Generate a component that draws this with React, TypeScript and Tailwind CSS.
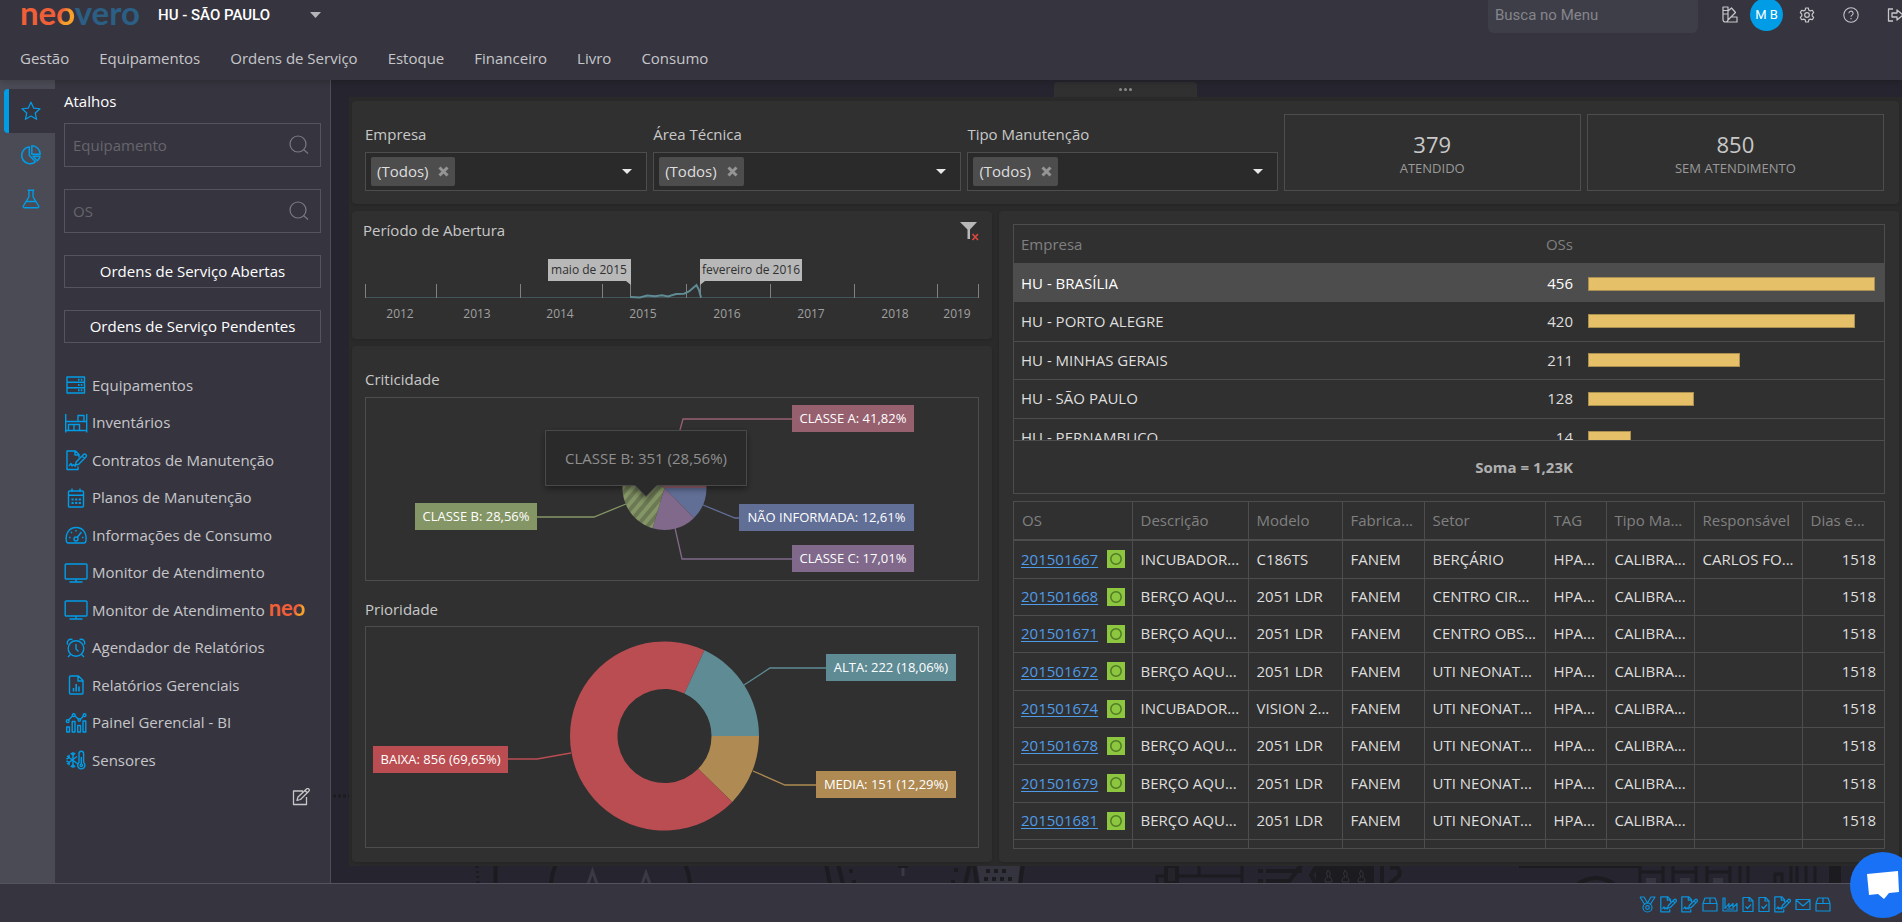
import React, { useState } from 'react';

const NAV = ['Gestão', 'Equipamentos', 'Ordens de Serviço', 'Estoque', 'Financeiro', 'Livro', 'Consumo'];

const Svg: React.FC<{ w?: number; h?: number; box?: string; sw?: number; className?: string; children: React.ReactNode }> = ({
  w = 24,
  h = 24,
  box = '0 0 24 24',
  sw = 1.4,
  className,
  children,
}) => (
  <svg width={w} height={h} viewBox={box} fill="none" stroke="currentColor" strokeWidth={sw} strokeLinejoin="round" aria-hidden="true" className={className}>
    {children}
  </svg>
);

const signedDoc = (
  <>
    <path d="M14 18.5v3H3V3h8.500l3.500 3.500v3M11 3v4h4M5 18l2-2.500 1 2.500 1.500-1.500 1.500 1.500h1" />
    <path d="M11.500 17l.8-3.300 7-7a1.600 1.600 0 0 1 2.600 2.300l-7.200 7.200zM18 8l2.500 2.300" />
  </>
);

const monitor = (
  <>
    <rect x="1.200" y="3" width="21.800" height="15" rx="1" />
    <path d="M12 18v3M5.500 21h13" />
  </>
);

const box3d = (
  <path d="M1 7.500h14V15H1zM1 7.500L3 2h10l2 5.500M8 2v5.500" />
);

const checkDoc = <path d="M1 1.500h6.500L11 5v10.500H1zM7 1.500V5h4M3.500 10.500l2 2 3.500-4" />;

const SHORTCUTS = [
  {
    label: 'Equipamentos',
    icon: (
      <>
        <rect x="3" y="4" width="17.500" height="16" />
        <path d="M3 9.300h17.500M3 14.700h17.500" />
        <path d="M14 6.700h1.500M16.800 6.700h1.500M14 12h1.500M16.800 12h1.500M14 17.300h1.500M16.800 17.300h1.500" strokeWidth="2" />
      </>
    ),
  },
  {
    label: 'Inventários',
    icon: <path d="M1.700 3v18.500M22.700 3v18.500M1.700 10.500h21M1.700 19.500h21M4.500 19.500v-6h11v6M10 13.500v6M14 10.500V4.500h6v6" />,
  },
  { label: 'Contratos de Manutenção', icon: signedDoc },
  {
    label: 'Planos de Manutenção',
    icon: (
      <>
        <rect x="4.500" y="5" width="15" height="16" rx="1" />
        <path d="M4.500 9.300h15M8 2.500V6M16 2.500V6" />
        <path d="M7.500 13.500h9.500M7.500 17h9.500" strokeWidth="2" strokeDasharray="2.200 1.400" />
      </>
    ),
  },
  {
    label: 'Informações de Consumo',
    icon: (
      <>
        <path d="M4 20a2 2 0 0 1-1.500-1.500C1 10 5.500 4.500 12.200 4.500S23.300 10 21.800 18.500A2 2 0 0 1 20 20z" />
        <circle cx="12" cy="16" r="2" />
        <path d="M13.200 14.500l4.300-5.500M12 7v1.500M7 9l1 1M5 14.500h1.500M18 14.500h1.500" />
      </>
    ),
  },
  { label: 'Monitor de Atendimento', icon: monitor },
  { label: 'Monitor de Atendimento', icon: monitor, neo: true },
  {
    label: 'Agendador de Relatórios',
    icon: (
      <>
        <circle cx="12" cy="12.500" r="7.800" />
        <path d="M12 8v5l2.500 2.500M3.500 8.500C2.500 5 5 2.500 8.500 3.500M20.500 8.500C21.500 5 19 2.500 15.500 3.500M6.500 18.500L4 21M17.500 18.500L20 21" />
      </>
    ),
  },
  {
    label: 'Relatórios Gerenciais',
    icon: (
      <>
        <path d="M6.500 3h8l4.500 4.500V20a1 1 0 0 1-1 1H6.500a1 1 0 0 1-1-1V4a1 1 0 0 1 1-1zM14 3v5h5" />
        <path d="M9.500 18.500V15M12.200 18.500V11M15 18.500v-5" strokeWidth="1.600" />
      </>
    ),
  },
  {
    label: 'Painel Gerencial - BI',
    icon: (
      <>
        <rect x="2.700" y="16" width="2.800" height="5" />
        <rect x="8.200" y="10.500" width="2.800" height="10.500" />
        <rect x="13.700" y="14.500" width="2.800" height="6.500" />
        <rect x="19" y="10" width="2.800" height="11" />
        <path d="M4.500 9l4-4M11 5l3.500 3.200M16.500 8.200L19.500 5" />
        <circle cx="3.700" cy="10.200" r="1.400" />
        <circle cx="9.700" cy="4.200" r="1.400" />
        <circle cx="15.300" cy="9" r="1.200" />
        <circle cx="20.500" cy="4.200" r="1.400" />
      </>
    ),
  },
  {
    label: 'Sensores',
    icon: (
      <>
        <path d="M9 4v16M3 8l11 8M3 16l10-7.500M6.800 5L9 7.200 11.200 5M6.800 19L9 16.800l2.200 2.200M2.500 11l2.700-1.300L5 6.800M2.500 13l2.700 1.300L5 17.200" />
        <path d="M15 14.500V5.500a2.300 2.300 0 0 1 4.600 0v9a3.600 3.600 0 1 1-4.600 0z" />
        <circle cx="17.300" cy="17.300" r="1.200" />
        <path d="M17.300 9v7" />
      </>
    ),
  },
];

const COMPANIES = [
  { name: 'HU - BRASÍLIA', count: 456, bar: 100 },
  { name: 'HU - PORTO ALEGRE', count: 420, bar: 93 },
  { name: 'HU - MINHAS GERAIS', count: 211, bar: 53 },
  { name: 'HU - SÃO PAULO', count: 128, bar: 37 },
  { name: 'HU - PERNAMBUCO', count: 14, bar: 15 },
];

const COLUMNS = [
  { title: 'OS', cls: 'w-[118px]' },
  { title: 'Descrição', cls: 'w-[116px]' },
  { title: 'Modelo', cls: 'w-[94px]' },
  { title: 'Fabrica...', cls: 'w-[82px]' },
  { title: 'Setor', cls: 'w-[121px]' },
  { title: 'TAG', cls: 'w-[61px]' },
  { title: 'Tipo Ma...', cls: 'w-[88px]' },
  { title: 'Responsável', cls: 'w-[108px]' },
  { title: 'Dias e...', cls: 'w-[82px]' },
];

const ORDERS = [
  ['201501667', 'INCUBADOR...', 'C186TS', 'BERÇÁRIO', 'CARLOS FO...'],
  ['201501668', 'BERÇO AQU...', '2051 LDR', 'CENTRO CIR...', ''],
  ['201501671', 'BERÇO AQU...', '2051 LDR', 'CENTRO OBS...', ''],
  ['201501672', 'BERÇO AQU...', '2051 LDR', 'UTI NEONAT...', ''],
  ['201501674', 'INCUBADOR...', 'VISION 2...', 'UTI NEONAT...', ''],
  ['201501678', 'BERÇO AQU...', '2051 LDR', 'UTI NEONAT...', ''],
  ['201501679', 'BERÇO AQU...', '2051 LDR', 'UTI NEONAT...', ''],
  ['201501681', 'BERÇO AQU...', '2051 LDR', 'UTI NEONAT...', ''],
];

// point on a circle, angle in degrees clockwise from 3 o'clock
const at = (cx: number, cy: number, r: number, deg: number) => {
  const a = (deg * Math.PI) / 180;
  return `${(cx + r * Math.cos(a)).toFixed(2)} ${(cy + r * Math.sin(a)).toFixed(2)}`;
};

const slice = (cx: number, cy: number, r: number, inner: number, from: number, to: number) => {
  const large = to - from > 180 ? 1 : 0;
  return `M${at(cx, cy, r, from)}A${r} ${r} 0 ${large} 1 ${at(cx, cy, r, to)}L${at(cx, cy, inner, to)}A${inner} ${inner} 0 ${large} 0 ${at(cx, cy, inner, from)}Z`;
};

interface Tag {
  text: string;
  color: string;
  x: number;
  y: number;
  w: number;
  line: string;
}

const ChartTag: React.FC<{ tag: Tag }> = ({ tag }) => (
  <g>
    <polyline points={tag.line} fill="none" stroke={tag.color} strokeWidth="1.3" />
    <rect x={tag.x} y={tag.y} width={tag.w} height="27" fill={tag.color} />
    <text x={tag.x + tag.w / 2} y={tag.y + 18} textAnchor="middle" fill="#fff" className="text-[13px]">
      {tag.text}
    </text>
  </g>
);

const CRITICIDADE: Tag[] = [
  { text: 'CLASSE A: 41,82%', color: '#97606f', x: 426, y: 7, w: 122, line: '426,21 317,21 309,50' },
  { text: 'CLASSE B: 28,56%', color: '#859666', x: 49, y: 105, w: 122, line: '171,119 228,119 260,106' },
  { text: 'NÃO INFORMADA: 12,61%', color: '#616e96', x: 373, y: 106, w: 175, line: '373,120 369,120 337,107' },
  { text: 'CLASSE C: 17,01%', color: '#80698b', x: 426, y: 147, w: 122, line: '426,161 316,161 309,130' },
];

const PRIORIDADE: Tag[] = [
  { text: 'ALTA: 222 (18,06%)', color: '#5f8b95', x: 460, y: 27, w: 130, line: '460,41 404,41 378,58' },
  { text: 'MEDIA: 151 (12,29%)', color: '#af8a53', x: 450, y: 144, w: 140, line: '450,158 419,158 387,144' },
  { text: 'BAIXA: 856 (69,65%)', color: '#ba4d51', x: 7, y: 119, w: 135, line: '142,132 171,132 205,126' },
];

const YEARS = [
  [35, '2012'],
  [112, '2013'],
  [195, '2014'],
  [278, '2015'],
  [362, '2016'],
  [446, '2017'],
  [530, '2018'],
  [592, '2019'],
] as const;

const Filter: React.FC<{ id: string; label: string }> = ({ id, label }) => {
  const [value, setValue] = useState('(Todos)');
  return (
    <div className="flex flex-col justify-end gap-2">
      <label htmlFor={id} className="leading-5">{label}</label>
      <div className="relative flex h-[39px] items-center border border-[#4d4d4d] bg-[#2a2a2a] pl-[5px]">
        {value && (
          <span className="flex h-[29px] shrink-0 items-center gap-[10px] rounded-xs bg-[#4d4d4d] px-[6px] text-[#dedede]">
            {value}
            <button type="button" aria-label={`Remover ${label}`} onClick={() => setValue('')} className="text-[#959595]">
              <Svg w={11} h={11} box="0 0 11 11" sw={3}><path d="M1.500 1.500l8 8M9.500 1.500l-8 8" /></Svg>
            </button>
          </span>
        )}
        <select id={id} value="" onChange={e => setValue(e.target.value)} className="h-full min-w-0 flex-1 appearance-none bg-transparent outline-none">
          <option value="" />
          <option value="(Todos)" />
        </select>
        <svg width="10" height="5" viewBox="0 0 10 5" className="pointer-events-none absolute right-[14px]" aria-hidden="true">
          <path d="M0 0h10L5 5z" fill="#e8e8e8" />
        </svg>
      </div>
    </div>
  );
};

const Kpi: React.FC<{ value: string; label: string }> = ({ value, label }) => (
  <div className="flex h-[77px] flex-col items-center justify-end border border-[#4d4d4d] pb-3">
    <div className="text-[22px] leading-7 text-[#c8c8c8]">{value}</div>
    <div className="text-[13px] leading-5 text-[#9a9a9a]">{label}</div>
  </div>
);

const Backdrop: React.FC = () => (
  <svg viewBox="331 80 1571 803" className="pointer-events-none absolute bottom-0 left-0 h-[803px] w-[1571px]" fill="none" stroke="#1b1b20" strokeWidth="4" aria-hidden="true">
    <path d="M333 796h17" strokeWidth="3" strokeDasharray="3 2" />
    <path d="M477 866l1 17" strokeWidth="3" strokeDasharray="2 3" />
    <path d="M495.500 866v17M556 864q-4 9-5 19M685 864q4 9 5 19M826 864l4 20M838 864l5 20M970 864l-5 20M974 864l3 20M1023 864l-3 20" />
    <path d="M588 884l4.500-13 4.500 13M642 884l4-11 4 11M903 868v8" stroke="#3a3a44" strokeWidth="3" />
    <path d="M898 866h10" />
    <path d="M977 866h43l-2 17h-38z" fill="#34343e" stroke="none" />
    <path d="M851 869v4M854 880v4M953 880v4M956 868v4M986 871h24M984 879h28" strokeWidth="4" strokeDasharray="4 4" />
    <path d="M1157 883v-7h86M1242 866v17M1199 866v10" strokeWidth="3" />
    <path d="M1166 866h11v17h-11z" fill="#24242a" />
    <path d="M1258 871h5M1266 871h36M1258 881h5M1266 881h24M1302 864l-15 20M1318 864l-7 11 5 9M1382 866v17M1390 868q12-3 9 8l-10 8" />
    <path d="M1316 866h58v17h-58z" fill="#1b1b20" stroke="none" />
    <path d="M1325 882q0-5 3-5-3-3 0-7 4 4 1 7 3 0 3 5zM1342 882q0-5 3-5-3-3 0-7 4 4 1 7 3 0 3 5zM1358 882q0-5 3-5-3-3 0-7 4 4 1 7 3 0 3 5z" stroke="#34343c" strokeWidth="1" />
    <path d="M1519 867h120" strokeWidth="2" />
    <path d="M1578 884q18-12 36 0" />
    <path d="M1640 866v17M1663 866v17M1640 872h23M1673 866v17M1696 866v17M1673 872h23M1707 866v17M1730 866v17M1707 872h23M1740 866v17M1748 866v17M1775 883v-9h7v9M1791 866v17M1797 866v17M1806 866v17M1815 866v17" strokeWidth="3" />
    <path d="M1646 878h10v5h-10zM1680 878h10v5h-10zM1713 878h10v5h-10z" fill="#34343e" stroke="none" />
    <path d="M1829 866h12v17h-12z" fill="#1b1b20" stroke="none" />
  </svg>
);

const Neo: React.FC = () => (
  <>
    <span className="text-[#f15f38]">ne</span>
    <span className="bg-linear-to-br from-[#f15f38] from-40% to-[#f9a02b] to-60% bg-clip-text text-transparent">o</span>
  </>
);

const Header: React.FC = () => (
  <header className="relative z-10 h-20 shrink-0 overflow-x-clip bg-[#36353f] shadow-md">
    <div className="flex h-[29px] items-center pl-5">
      <a href="#inicio" aria-label="neovero" className="flex h-[29px] w-[121px] items-center font-['Lato',sans-serif] text-[33px] leading-[20px] font-bold">
        <span className="-mt-[6px] whitespace-nowrap"><Neo /><span className="text-[#2b5f85]">vero</span></span>
      </a>
      <div className="relative ml-[17px] flex w-[163px] items-center font-['Roboto',sans-serif]">
        <select aria-label="Unidade" className="w-full appearance-none bg-transparent text-[15px] leading-6 font-medium text-white outline-none">
          <option>HU - SÃO PAULO</option>
        </select>
        <svg width="11" height="6" viewBox="0 0 11 6" className="pointer-events-none absolute right-0" aria-hidden="true"><path d="M0 0h11L5.500 6z" fill="#b4b4b8" /></svg>
      </div>
      <input
        aria-label="Busca no Menu"
        placeholder="Busca no Menu"
        className="ml-auto h-[37px] w-[210px] shrink-0 rounded-md bg-[#3e3e48] px-[7px] font-['Roboto',sans-serif] text-[15px] text-[#c6c6ca] outline-none placeholder:text-[#85858b]"
      />
      <div className="-mr-[3px] ml-6 flex shrink-0 items-center text-[#c6c6ca]">
        <button type="button" aria-label="Temas">
          <Svg w={16} h={17} box="0 0 16 17" sw={1.2}>
            <path d="M1 1h5v12.500a2.500 2.500 0 0 1-5 0zM1 4.500h5M1 8h5M6 5l3.500-3 4 4.500L6 14M9.500 11H15v5H3.500" />
          </Svg>
        </button>
        <button type="button" className="ml-[12px] h-[33px] w-[33px] rounded-full bg-[#009ce6] font-['Roboto',sans-serif] text-[13px] text-white">M B</button>
        <button type="button" aria-label="Configurações" className="ml-4">
          <Svg w={16} h={16} sw={1.800}>
            <path d="M10 1.500h4l.7 3.200 2.300 1.200 3-1 2 3.400-2.200 2.300v2.800l2.200 2.300-2 3.400-3-1-2.300 1.200-.7 3.200h-4l-.7-3.200L7 18.100l-3 1-2-3.400 2.200-2.300v-2.800L2 8.300l2-3.400 3 1 2.300-1.200z" />
            <circle cx="12" cy="12" r="3.500" />
          </Svg>
        </button>
        <button type="button" aria-label="Ajuda" className="ml-7">
          <Svg w={16} h={16} sw={1.600}>
            <circle cx="12" cy="12" r="10.800" />
            <path d="M8.800 9.500a3.200 3.200 0 1 1 4.800 2.700c-1.200.7-1.600 1.200-1.600 2.500M12 16.500v2" />
          </Svg>
        </button>
        <button type="button" aria-label="Sair" className="ml-7">
          <Svg w={18} h={16} box="0 0 18 16" sw={1.300}>
            <path d="M6 2H1.500v12H6M5 6h5V3l6 5-6 5v-3H5z" />
          </Svg>
        </button>
      </div>
    </div>
    <nav className="mt-2 flex h-[42px] items-center gap-[30px] pl-5 text-[#c6c6ca]">
      {NAV.map(item => (
        <a key={item} href="#menu">{item}</a>
      ))}
    </nav>
  </header>
);

const SearchBox: React.FC<{ label: string }> = ({ label }) => (
  <div className="relative mb-[22px] flex h-11 items-center border border-[#55545e]">
    <input aria-label={label} placeholder={label} className="h-full w-full bg-transparent px-2 text-[#c6c6ca] outline-none placeholder:text-[#66656c]" />
    <Svg w={20} h={20} box="0 0 20 20" sw={1.2} className="pointer-events-none absolute right-[11px] text-[#7b7a81]">
      <circle cx="9" cy="9" r="8" />
      <path d="M14.500 14.500l4.500 4" />
    </Svg>
  </div>
);

const Sidebar: React.FC = () => (
  <aside className="flex shrink-0">
    <div className="flex w-[55px] flex-col bg-[#4b4b55] pt-[9px] pl-1 text-[#009ce6]">
      <button type="button" aria-label="Atalhos" className="flex h-11 items-center justify-center rounded-l border-l-5 border-[#009ce6] bg-[#36353f] pr-[2px]">
        <Svg w={20} h={20} sw={1.500}><path d="M12 1.500l3.200 7 7.600.8-5.700 5.100 1.600 7.600-6.700-3.900L5.300 22l1.600-7.600-5.700-5.100 7.600-.8z" /></Svg>
      </button>
      <button type="button" aria-label="Indicadores" className="flex h-11 items-center justify-center pl-[3px]">
        <Svg w={20} h={20} sw={1.800}>
          <path d="M10 2.500A10 10 0 1 0 17.500 20L10 12.500zM13 1v10h10A10 10 0 0 0 13 1zM14.500 13.500h8.300a9 9 0 0 1-3.300 5.500z" />
        </Svg>
      </button>
      <button type="button" aria-label="Laboratório" className="flex h-11 items-center justify-center pl-[3px]">
        <Svg w={20} h={20} sw={1.600}><path d="M8 1.500h8M9.500 1.500v8L2.700 20.500q-.5 2 1.500 2h15.600q2 0 1.500-2L14.500 9.500v-8M6.500 15h11" /></Svg>
      </button>
    </div>
    <div className="w-[276px] border-r border-[#4f4e58] bg-[#36353f] px-[9px] pt-[11px]">
      <h2 className="mb-3 leading-5 text-white">Atalhos</h2>
      <SearchBox label="Equipamento" />
      <SearchBox label="OS" />
      <button type="button" className="mb-[22px] block h-[33px] w-full border border-[#55545e] text-white">Ordens de Serviço Abertas</button>
      <button type="button" className="mb-6 block h-[33px] w-full border border-[#55545e] text-white">Ordens de Serviço Pendentes</button>
      <ul className="flex h-[411px] flex-col justify-between text-[#c6c6ca]">
        {SHORTCUTS.map((s, i) => (
          <li key={i}>
            <a href="#atalho" className="flex h-9 items-center">
              <span className="mr-1 text-[#009ce6]"><Svg>{s.icon}</Svg></span>
              {s.label}
              {s.neo && <span className="-mt-1 ml-1 font-['Lato',sans-serif] text-[22px] leading-5 font-bold"><Neo /></span>}
            </a>
          </li>
        ))}
      </ul>
      <div className="mt-[10px] flex justify-end pr-[10px]">
        <button type="button" aria-label="Editar atalhos" className="text-[#c6c6ca]">
          <Svg w={19} h={18} box="0 0 19 18" sw={1.300}>
            <path d="M11 3H1.500v13.500H14.500V9M5 12.500l1-3.500 8.500-8a1.500 1.500 0 0 1 2.300 2.200l-8.300 8.300zM13 2.500l2.300 2.300" />
          </Svg>
        </button>
      </div>
    </div>
  </aside>
);

const PeriodChart: React.FC = () => (
  <svg viewBox="0 0 614 70" className="block w-full" role="img" aria-label="Período de Abertura">
    <path d="M1 42.500h612" stroke="#41545a" />
    {[0.5, 71.5, 155.5, 237.5, 321.5, 405.5, 489.5, 572.5, 613.5].map(x => (
      <path key={x} d={`M${x} 29v14`} stroke="#808080" />
    ))}
    <path d="M265.500 4v39M335.500 4v39" stroke="#808080" />
    <polyline points="265,42 275,42.500 282,40.500 290,41.200 297,40.300 303,41.500 311,39 319,38.700 324,36.500 328,33 331.500,30 334,35 336,42.500" fill="none" stroke="#5f8b95" strokeWidth="2" />
    <path d="M183 4h83v26l-5-4h-78zM335 4h102v22h-97l-5 4z" fill="#b8b8b8" />
    <text x="224" y="19" textAnchor="middle" fill="#303030" className="text-[12px]">maio de 2015</text>
    <text x="386" y="19" textAnchor="middle" fill="#303030" className="text-[12px]">fevereiro de 2016</text>
    {YEARS.map(([x, y]) => (
      <text key={y} x={x} y="63" textAnchor="middle" fill="#a0a0a0" className="text-[12px]">{y}</text>
    ))}
  </svg>
);

const CriticidadeChart: React.FC = () => (
  <svg viewBox="0 0 612 182" className="block w-full" role="img" aria-label="Criticidade">
    <defs>
      <pattern id="hatch" width="8" height="8" patternUnits="userSpaceOnUse" patternTransform="rotate(40)">
        <path d="M0 0h8v8H0z" fill="#859666" />
        <path d="M0 0h4v8H0z" fill="#6b7853" />
      </pattern>
      <filter id="tip" x="-10%" y="-20%" width="120%" height="150%">
        <feDropShadow dx="0" dy="3" stdDeviation="3" floodColor="#000" floodOpacity="0.4" />
      </filter>
    </defs>
    {CRITICIDADE.map(t => <ChartTag key={t.text} tag={t} />)}
    <path d={slice(298.5, 90, 42, 0, 0, 45.4)} fill="#616e96" />
    <path d={slice(298.5, 90, 42, 0, 45.4, 106.6)} fill="#80698b" />
    <path d={slice(298.5, 90, 42, 0, 106.6, 209.4)} fill="url(#hatch)" />
    <path d={slice(298.5, 90, 42, 0, 209.4, 360)} fill="#97606f" />
    <path d="M179.500 32.500h201v55h-89.500l-11 11-11-11h-89.500z" fill="#2a2a2a" stroke="#4a4a4a" filter="url(#tip)" />
    <text x="280" y="66" textAnchor="middle" fill="#8f8f8f" className="text-[15px]">CLASSE B: 351 (28,56%)</text>
  </svg>
);

const PrioridadeChart: React.FC = () => (
  <svg viewBox="0 0 612 220" className="block w-full" role="img" aria-label="Prioridade">
    {PRIORIDADE.map(t => <ChartTag key={t.text} tag={t} />)}
    <path d={slice(298.5, 109, 94.5, 47, 0, 44.2)} fill="#af8a53" />
    <path d={slice(298.5, 109, 94.5, 47, 44.2, 295)} fill="#ba4d51" />
    <path d={slice(298.5, 109, 94.5, 47, 295, 360)} fill="#5f8b95" />
  </svg>
);

const CompanyTable: React.FC = () => (
  <div className="border border-[#4d4d4d]">
    <div className="h-[215px] overflow-hidden">
      <table className="w-full table-fixed">
        <colgroup>
          <col />
          <col className="w-[100px]" />
          <col className="w-[303px]" />
        </colgroup>
        <thead>
          <tr className="h-[39px] border-b-2 border-[#4d4d4d] text-[#808080]">
            <th className="px-[7px] text-left font-normal">Empresa</th>
            <th className="px-2 text-right font-normal">OSs</th>
            <th />
          </tr>
        </thead>
        <tbody className="text-[#dedede]">
          {COMPANIES.map((c, i) => (
            <tr key={c.name} className={i === 0 ? 'h-[38px] bg-[#4d4d4d] text-white' : i === 2 ? 'h-[38px] border-b border-[#4d4d4d]' : 'h-[39px] border-b border-[#4d4d4d]'}>
              <td className="px-[7px]">{c.name}</td>
              <td className="px-2 text-right">{c.count}</td>
              <td className="pr-[9px] pl-[7px]">
                <div className="h-[14px] border border-[#a98f50] bg-[#e5c068]" style={{ width: `${c.bar}%` }} />
              </td>
            </tr>
          ))}
        </tbody>
      </table>
    </div>
    <div className="flex h-[53px] items-center border-t border-[#4d4d4d]">
      <div className="flex-1 pr-2 text-right font-bold text-[#b0b0b0]">Soma = 1,23K</div>
      <div className="w-[303px]" />
    </div>
  </div>
);

const OrdersTable: React.FC = () => (
  <div className="h-[348px] overflow-hidden border border-[#4d4d4d]">
    <table className="w-full table-fixed whitespace-nowrap">
      <thead>
        <tr className="h-[38px] border-b-2 border-[#4d4d4d] text-[#808080]">
          {COLUMNS.map(c => (
            <th key={c.title} className={`${c.cls} overflow-hidden border-r border-[#4d4d4d] px-2 text-left font-normal last:border-r-0`}>{c.title}</th>
          ))}
        </tr>
      </thead>
      <tbody className="text-[#dedede]">
        {ORDERS.map(([os, desc, model, sector, owner], i) => (
          <tr key={os} className={i % 3 === 0 ? 'h-[38px] border-b border-[#4d4d4d]' : 'h-[37px] border-b border-[#4d4d4d]'}>
            <td className="border-r border-[#4d4d4d] px-[7px]">
              <div className="flex items-center justify-between">
                <a href="#os" className="text-[#4f9be8] underline underline-offset-2">{os}</a>
                <svg width="18" height="18" viewBox="0 0 18 18" aria-hidden="true">
                  <path d="M0 0h18v18H0z" fill="#8dc63f" />
                  <circle cx="9" cy="9" r="5.2" fill="none" stroke="#4f7a26" strokeWidth="1.5" />
                </svg>
              </div>
            </td>
            {[desc, model, 'FANEM', sector, 'HPA...', 'CALIBRA...', owner].map((v, k) => (
              <td key={k} className="overflow-hidden border-r border-[#4d4d4d] px-2">{v}</td>
            ))}
            <td className="px-2 text-right">1518</td>
          </tr>
        ))}
        <tr className="h-[38px]">
          {COLUMNS.map(c => (
            <td key={c.title} className="border-r border-[#4d4d4d] last:border-r-0" />
          ))}
        </tr>
      </tbody>
    </table>
  </div>
);

const Dashboard: React.FC = () => (
  <main className="relative min-w-0 flex-1 overflow-hidden bg-[#26252f] pb-[17px] pl-[18px]">
    <Backdrop />
    <div className="relative flex flex-col pt-[2px] text-[#c8c8c8]">
      <button type="button" aria-label="Opções do painel" className="flex h-[15px] w-[143px] items-center justify-center gap-[2px] self-center rounded-t-sm bg-[#303030]">
        <span className="h-[3px] w-[3px] rounded-full bg-[#8a8a8a]" />
        <span className="h-[3px] w-[3px] rounded-full bg-[#8a8a8a]" />
        <span className="h-[3px] w-[3px] rounded-full bg-[#8a8a8a]" />
      </button>
      <div className="flex flex-col gap-[7px] bg-[#2a2a2a] px-[3px] py-1">
        <section className="grid grid-cols-[282fr_308fr_310fr_297fr_297fr] gap-[6px] rounded-sm bg-[#303030] pt-[13px] pr-[15px] pb-[13px] pl-[13px] shadow">
          <Filter id="empresa" label="Empresa" />
          <Filter id="area" label="Área Técnica" />
          <Filter id="tipo" label="Tipo Manutenção" />
          <Kpi value="379" label="ATENDIDO" />
          <Kpi value="850" label="SEM ATENDIMENTO" />
        </section>
        <div className="grid grid-cols-[640fr_900fr] gap-[7px]">
          <div className="flex flex-col gap-[7px]">
            <section className="rounded-sm bg-[#303030] px-[13px] pt-[9px] pb-[14px] shadow">
              <div className="flex h-[35px] items-start justify-between">
                <h3 className="-ml-[2px] leading-5">Período de Abertura</h3>
                <button type="button" aria-label="Limpar filtro" className="mt-[2px]">
                  <svg width="19" height="19" viewBox="0 0 19 19" aria-hidden="true">
                    <path d="M0 0h17l-7 7.500V17H7.500V7.500z" fill="#b8b8b8" />
                    <path d="M12.500 12l5.500 6M18 12l-5.500 6" stroke="#e0483e" strokeWidth="1.600" />
                  </svg>
                </button>
              </div>
              <PeriodChart />
            </section>
            <section className="rounded-sm bg-[#303030] px-[13px] pt-[23px] pb-[14px] shadow">
              <h3 className="mb-2 leading-5">Criticidade</h3>
              <div className="mb-[18px] border border-[#4d4d4d]"><CriticidadeChart /></div>
              <h3 className="mb-[7px] leading-5">Prioridade</h3>
              <div className="border border-[#4d4d4d]"><PrioridadeChart /></div>
            </section>
          </div>
          <section className="flex flex-col gap-[7px] rounded-sm bg-[#303030] px-[14px] pt-[13px] pb-[13px] shadow">
            <CompanyTable />
            <OrdersTable />
          </section>
        </div>
      </div>
    </div>
  </main>
);

const FOOTER_ICONS = [
  {
    w: 17,
    d: (
      <>
        <path d="M1 1h4l3.500 6L12 1h4l-5 8M1 1l5 8" />
        <circle cx="8.500" cy="11.500" r="4.500" />
        <circle cx="8.500" cy="11.500" r="1.800" />
      </>
    ),
  },
  { w: 17, doc: true },
  { w: 17, doc: true },
  { w: 16, d: box3d },
  { w: 16, d: <path d="M1 2h2v10.500l4-5v4l4-4v4l4-4V15H1zM4.500 13h8" /> },
  { w: 12, d: checkDoc },
  { w: 12, d: checkDoc },
  { w: 17, doc: true },
  { w: 16, d: <path d="M1 3.500h14v10H1zM1 4l7 6 7-6" /> },
  { w: 16, d: box3d },
];

const App: React.FC = () => (
  <div className="flex min-h-screen flex-col overflow-hidden bg-[#26252f] font-['Open_Sans','Noto_Sans',sans-serif] text-[15px]">
    <Header />
    <div className="flex flex-1">
      <Sidebar />
      <Dashboard />
    </div>
    <footer className="flex h-[39px] shrink-0 items-center justify-end gap-1 border-t border-[#55545e] bg-[#36353f] pt-[2px] pr-[71px] text-[#0a93dc]">
      {FOOTER_ICONS.map((f, i) => (
        <button key={i} type="button" aria-label={`Atalho ${i + 1}`}>
          {f.doc ? (
            <Svg w={17} h={17} box="2 2 21 21" sw={1.600}>{signedDoc}</Svg>
          ) : (
            <Svg w={f.w} h={17} box={`0 0 ${f.w} 17`} sw={1.200}>{f.d}</Svg>
          )}
        </button>
      ))}
    </footer>
    <button type="button" aria-label="Abrir chat" className="fixed -right-[14px] bottom-1 z-20 flex h-[66px] w-[66px] items-center justify-center rounded-full bg-[#1972f5]">
      <svg width="34" height="30" viewBox="0 0 34 30" aria-hidden="true">
        <path d="M1 4l31-3 1 21-10 1-5 6-6-5-9 1z" fill="#fff" />
      </svg>
    </button>
  </div>
);

export default App;
